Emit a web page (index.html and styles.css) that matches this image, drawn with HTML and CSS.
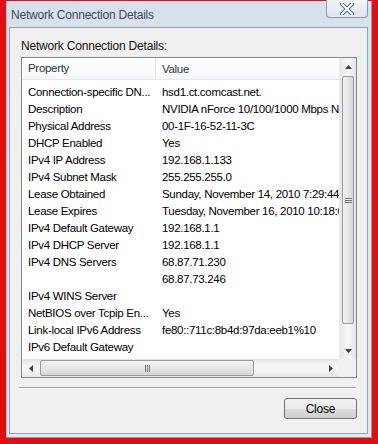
FILE: index.html
```html
<!DOCTYPE html>
<html lang="en">
<head>
    <meta charset="UTF-8">
    <meta name="viewport" content="width=device-width, initial-scale=1.0">
    <title>Network Connection Details</title>
    <link rel="stylesheet" href="styles.css">
</head>
<body>
    <div class="window">
        <div class="titlebar">
            <span class="title">Network Connection Details</span>
            <button class="close-x">
                <svg width="14" height="12" viewBox="0 0 14 12">
                    <path d="M2 1 L12 11 M12 1 L2 11" stroke="#56697f" stroke-width="4" stroke-linecap="square"/>
                    <path d="M2 1 L12 11 M12 1 L2 11" stroke="#ffffff" stroke-width="2" stroke-linecap="square"/>
                </svg>
            </button>
        </div>
        <div class="client">
            <p class="caption">Network Connection Details:</p>
            <div class="listview">
                <div class="lv-main">
                    <div class="lv-content">
                        <div class="lv-header">
                            <span class="col-prop">Property</span>
                            <span class="col-val">Value</span>
                        </div>
                        <div class="lv-rows">
                            <div class="row"><span class="col-prop">Connection-specific DN...</span><span class="col-val">hsd1.ct.comcast.net.</span></div>
                            <div class="row"><span class="col-prop">Description</span><span class="col-val">NVIDIA nForce 10/100/1000 Mbps N</span></div>
                            <div class="row"><span class="col-prop">Physical Address</span><span class="col-val">00-1F-16-52-11-3C</span></div>
                            <div class="row"><span class="col-prop">DHCP Enabled</span><span class="col-val">Yes</span></div>
                            <div class="row"><span class="col-prop">IPv4 IP Address</span><span class="col-val">192.168.1.133</span></div>
                            <div class="row"><span class="col-prop">IPv4 Subnet Mask</span><span class="col-val">255.255.255.0</span></div>
                            <div class="row"><span class="col-prop">Lease Obtained</span><span class="col-val">Sunday, November 14, 2010 7:29:44</span></div>
                            <div class="row"><span class="col-prop">Lease Expires</span><span class="col-val">Tuesday, November 16, 2010 10:18:0</span></div>
                            <div class="row"><span class="col-prop">IPv4 Default Gateway</span><span class="col-val">192.168.1.1</span></div>
                            <div class="row"><span class="col-prop">IPv4 DHCP Server</span><span class="col-val">192.168.1.1</span></div>
                            <div class="row"><span class="col-prop">IPv4 DNS Servers</span><span class="col-val">68.87.71.230</span></div>
                            <div class="row"><span class="col-prop"></span><span class="col-val">68.87.73.246</span></div>
                            <div class="row"><span class="col-prop">IPv4 WINS Server</span><span class="col-val"></span></div>
                            <div class="row"><span class="col-prop">NetBIOS over Tcpip En...</span><span class="col-val">Yes</span></div>
                            <div class="row"><span class="col-prop">Link-local IPv6 Address</span><span class="col-val">fe80::711c:8b4d:97da:eeb1%10</span></div>
                            <div class="row"><span class="col-prop">IPv6 Default Gateway</span><span class="col-val"></span></div>
                            <div class="row"><span class="col-prop">IPv6 DNS Server</span><span class="col-val"></span></div>
                        </div>
                    </div>
                    <div class="vscroll">
                        <div class="sb-btn">
                            <svg width="7" height="4" viewBox="0 0 7 4"><polygon points="0,4 3.5,0 7,4" fill="#404040"/></svg>
                        </div>
                        <div class="vtrack">
                            <div class="vthumb">
                                <svg width="7" height="5" viewBox="0 0 7 5"><path d="M0 0.5H7M0 2.5H7M0 4.5H7" stroke="#7a7a7a"/></svg>
                            </div>
                        </div>
                        <div class="sb-btn">
                            <svg width="7" height="4" viewBox="0 0 7 4"><polygon points="0,0 3.5,4 7,0" fill="#404040"/></svg>
                        </div>
                    </div>
                </div>
                <div class="hscroll-row">
                    <div class="hscroll">
                        <div class="sb-btn">
                            <svg width="4" height="7" viewBox="0 0 4 7"><polygon points="4,0 0,3.5 4,7" fill="#404040"/></svg>
                        </div>
                        <div class="htrack">
                            <div class="hthumb">
                                <svg width="5" height="7" viewBox="0 0 5 7"><path d="M0.5 0V7M2.5 0V7M4.5 0V7" stroke="#7a7a7a"/></svg>
                            </div>
                        </div>
                        <div class="sb-btn">
                            <svg width="4" height="7" viewBox="0 0 4 7"><polygon points="0,0 4,3.5 0,7" fill="#404040"/></svg>
                        </div>
                    </div>
                    <div class="corner"></div>
                </div>
            </div>
            <div class="separator"></div>
            <div class="buttons">
                <button class="btn">Close</button>
            </div>
        </div>
    </div>
</body>
</html>
```

FILE: styles.css
```css
* {
    margin: 0;
    padding: 0;
    box-sizing: border-box;
    font-family: 'Liberation Sans', Arial, sans-serif;
}

body {
    background: #e20f10;
    padding: 1px 6px 6px 6px;
    width: 378px;
    height: 444px;
    overflow: hidden;
}

.window {
    width: 366px;
    height: 437px;
    background: linear-gradient(#d7e1ec, #dfe6ee 60%, #e3e8ef);
    padding: 0 3px 4px 2px;
    border-left: 1px solid #b8c4d1;
    border-right: 1px solid #8e9cad;
    border-bottom: 1px solid #8e9cad;
}

.titlebar {
    height: 26px;
    display: flex;
    justify-content: space-between;
    align-items: flex-start;
}

.title {
    font-size: 12px;
    color: #3a4a5e;
    padding: 7px 0 0 2px;
    letter-spacing: -0.2px;
}

.close-x {
    width: 42px;
    height: 18px;
    margin-top: -1px;
    border: 1px solid #8899ad;
    border-top: none;
    border-radius: 0 0 4px 4px;
    background: linear-gradient(#f1f4f8, #dee5ee);
    display: flex;
    align-items: center;
    justify-content: center;
}

.client {
    height: 407px;
    background: #f0f0f0;
    border: 1px solid #97a3b1;
    padding: 11px 10px 14px 11px;
    display: flex;
    flex-direction: column;
}

.caption {
    font-size: 12px;
    line-height: 14px;
    height: 14px;
    color: #111;
    letter-spacing: -0.2px;
    margin-bottom: 4px;
}

.listview {
    height: 321px;
    border: 1px solid #828790;
    background: white;
    display: flex;
    flex-direction: column;
}

.lv-main {
    display: flex;
    height: 301px;
}

.lv-content {
    flex: 1;
    overflow: hidden;
}

.lv-header {
    height: 22px;
    display: flex;
    align-items: center;
    background: linear-gradient(#ffffff, #f6f7f9);
    border-bottom: 1px solid #e4e8ed;
}

.lv-header .col-prop {
    border-right: 1px solid #e2e5e9;
    height: 22px;
    line-height: 21px;
}

.lv-rows {
    padding-top: 3px;
}

.row {
    height: 17px;
    display: flex;
    align-items: center;
}

.col-prop,
.col-val {
    font-size: 11.5px;
    letter-spacing: -0.3px;
    white-space: nowrap;
    overflow: hidden;
    padding-left: 6px;
    color: #000;
}

.lv-header .col-prop,
.lv-header .col-val {
    color: #27364a;
}

.col-prop {
    width: 134px;
    flex-shrink: 0;
}

.col-val {
    flex: 1;
}

.vscroll {
    width: 17px;
    display: flex;
    flex-direction: column;
    background: linear-gradient(90deg, #e6e6e6, #f5f5f5 40%, #f5f5f5 60%, #e6e6e6);
    border-left: 1px solid #ececec;
}

.sb-btn {
    width: 17px;
    height: 17px;
    flex-shrink: 0;
    display: flex;
    align-items: center;
    justify-content: center;
}

.vtrack {
    flex: 1;
    padding: 1px 2px;
}

.vthumb {
    height: 248px;
    border: 1px solid #9a9a9a;
    border-radius: 2px;
    background: linear-gradient(90deg, #f3f3f3, #e6e6e6 50%, #d6d6d6);
    display: flex;
    align-items: center;
    justify-content: center;
}

.hscroll-row {
    display: flex;
    height: 18px;
}

.hscroll {
    flex: 1;
    display: flex;
    background: linear-gradient(#e6e6e6, #f5f5f5 40%, #f5f5f5 60%, #e6e6e6);
}

.hscroll .sb-btn {
    height: 18px;
}

.htrack {
    flex: 1;
    padding: 1px;
}

.hthumb {
    width: 214px;
    height: 16px;
    border: 1px solid #9a9a9a;
    border-radius: 2px;
    background: linear-gradient(#f3f3f3, #e6e6e6 50%, #d6d6d6);
    display: flex;
    align-items: center;
    justify-content: center;
}

.corner {
    width: 17px;
    background: #f0f0f0;
}

.separator {
    height: 2px;
    margin: 9px 1px 0 -2px;
    border-top: 1px solid #a0a0a0;
    border-bottom: 1px solid #ffffff;
}

.buttons {
    display: flex;
    justify-content: flex-end;
    margin-top: 9px;
}

.btn {
    width: 73px;
    height: 21px;
    border: 1px solid #707070;
    border-radius: 3px;
    background: linear-gradient(#f2f2f2, #ebebeb 50%, #dddddd 51%, #cfcfcf);
    font-size: 12px;
    letter-spacing: -0.2px;
    color: #000;
}
```
